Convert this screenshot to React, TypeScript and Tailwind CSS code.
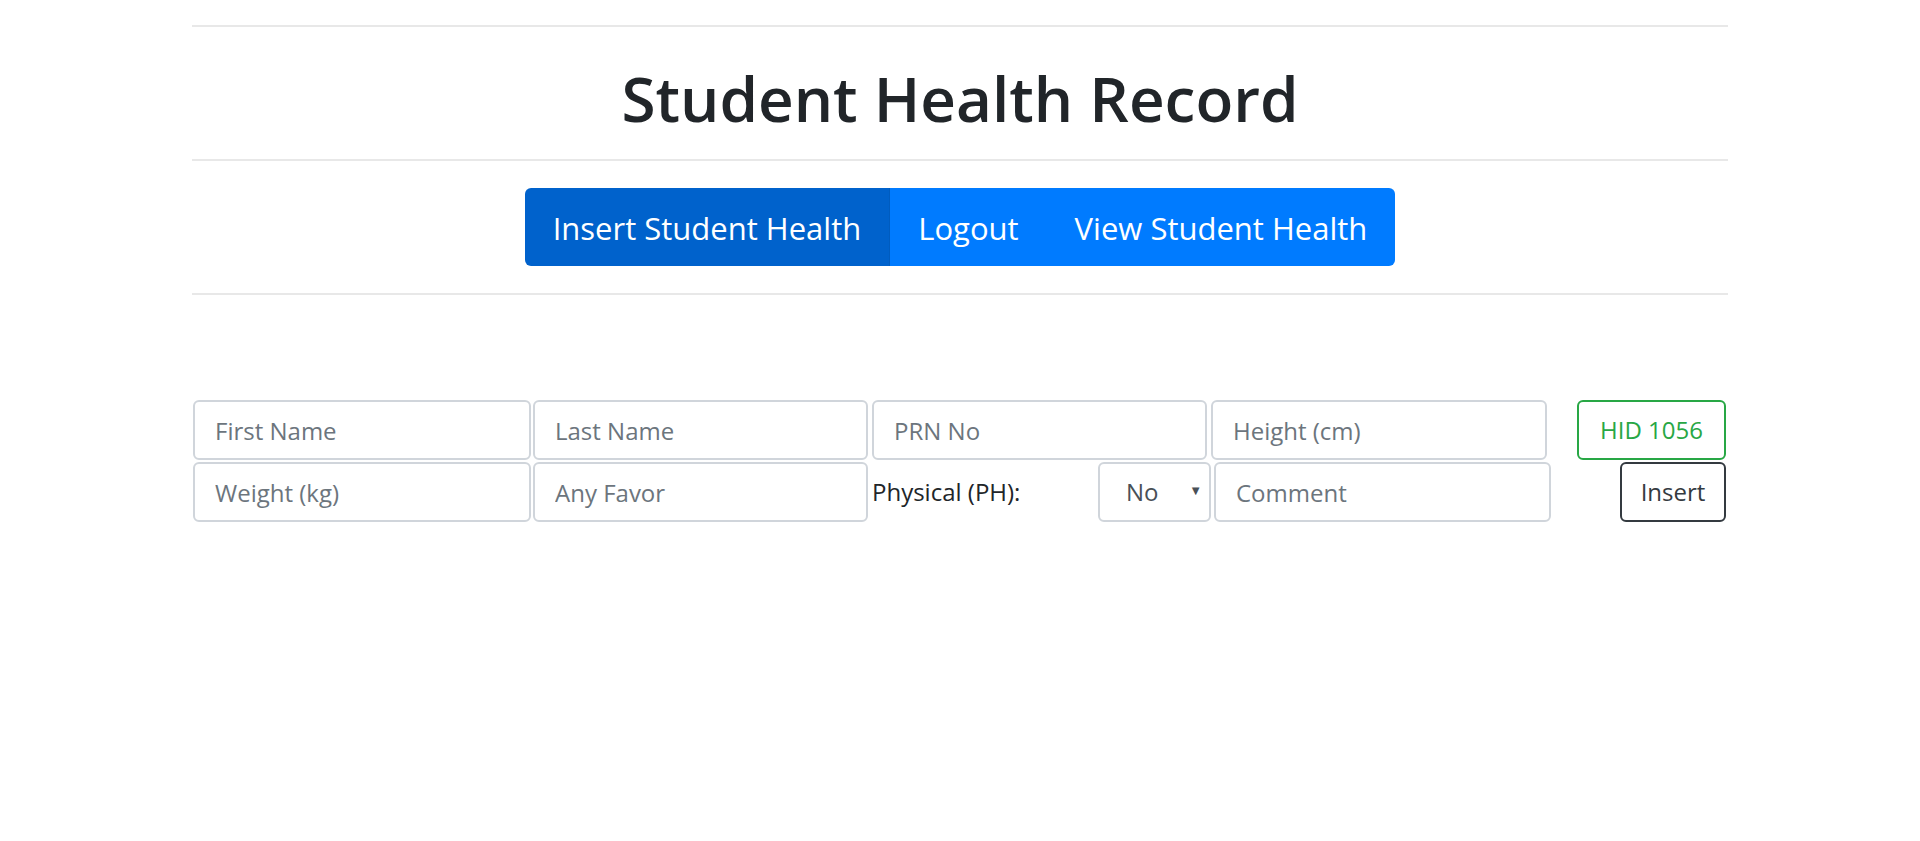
import { useState } from "react";

const navItems = [
  { label: "Insert Student Health", active: true },
  { label: "Logout", active: false },
  { label: "View Student Health", active: false },
];

const Divider = () => <div className="h-[2px] w-full bg-[#e8e8e8]" />;

const inputClass =
  "h-[60px] rounded-[6px] border-2 border-[#d0d5db] bg-white pl-[20px] pr-3 text-[24px] text-[#495057] placeholder:text-[#6c757d] outline-none";

export default function App() {
  const [physical, setPhysical] = useState("No");

  return (
    <div
      className="min-h-screen w-full bg-white text-[#212529]"
      style={{ fontFamily: '"Open Sans", "Noto Sans", sans-serif' }}
    >
      <div className="mx-auto w-[1536px] pt-[25px]">
        <Divider />

        {/* Title */}
        <div className="pt-[40px] pb-[30px] text-center">
          <h1 className="text-[62px] leading-[62px] font-semibold">
            Student Health Record
          </h1>
        </div>

        <Divider />

        {/* Nav group */}
        <div className="flex justify-center py-[27px]">
          <div className="flex overflow-hidden rounded-[6px]">
            {navItems.map((item) => (
              <button
                key={item.label}
                className={
                  item.active
                    ? "h-[78px] bg-[#0062cc] px-[28px] pt-[2px] text-[31px] leading-[76px] text-white border-r border-[#005cbf]"
                    : "h-[78px] bg-[#007bff] px-[28px] pt-[2px] text-[31px] leading-[76px] text-white"
                }
              >
                {item.label}
              </button>
            ))}
          </div>
        </div>

        <Divider />

        {/* Form */}
        <form className="mt-[105px] pl-[1px] pr-[2px]" onSubmit={(e) => e.preventDefault()}>
          <div className="flex items-center">
            <input className={`${inputClass} w-[338px]`} placeholder="First Name" />
            <input className={`${inputClass} ml-[2px] w-[335px]`} placeholder="Last Name" />
            <input className={`${inputClass} ml-[4px] w-[335px]`} placeholder="PRN No" />
            <input className={`${inputClass} ml-[4px] w-[336px]`} placeholder="Height (cm)" />
            <button
              type="button"
              className="ml-auto h-[60px] w-[149px] rounded-[6px] border-2 border-[#28a745] text-[24px] text-[#28a745]"
            >
              HID 1056
            </button>
          </div>

          <div className="mt-[2px] flex items-center">
            <input className={`${inputClass} w-[338px]`} placeholder="Weight (kg)" />
            <input className={`${inputClass} ml-[2px] w-[335px]`} placeholder="Any Favor" />
            <label className="ml-[4px] w-[226px] text-[24px] text-[#212529]">
              Physical (PH):
            </label>
            <div className="relative w-[113px]">
              <select
                value={physical}
                onChange={(e) => setPhysical(e.target.value)}
                className="h-[60px] w-full appearance-none rounded-[6px] border-2 border-[#d0d5db] bg-white pl-[26px] text-[24px] text-[#495057] outline-none"
              >
                <option>No</option>
                <option>Yes</option>
              </select>
              <span className="pointer-events-none absolute right-[9px] top-[19px] text-[13px] text-[#495057]">
                ▼
              </span>
            </div>
            <input className={`${inputClass} ml-[3px] w-[337px]`} placeholder="Comment" />
            <button
              type="submit"
              className="ml-auto h-[60px] w-[106px] rounded-[6px] border-2 border-[#343a40] text-[24px] text-[#343a40]"
            >
              Insert
            </button>
          </div>
        </form>
      </div>
    </div>
  );
}
